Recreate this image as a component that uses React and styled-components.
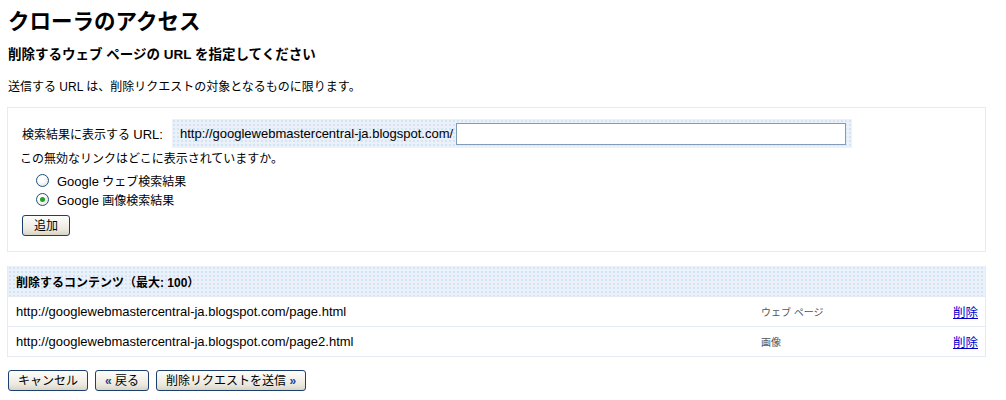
import React, { useState } from "react";
import styled, { createGlobalStyle } from "styled-components";

const GlobalStyle = createGlobalStyle`
  body {
    margin: 0;
    background: #fff;
    font-family: "Liberation Sans", "Noto Sans CJK JP", sans-serif;
    color: #000;
  }
`;

const dotted = `
  background-color: #ecf0f9;
  background-image: radial-gradient(circle, #cfe6f5 0.7px, transparent 0.9px);
  background-size: 4px 4px;
`;

const Page = styled.div`
  width: 979px;
  padding: 8px 0 0 7px;
`;

const Title = styled.h1`
  margin: 0 0 0 1px;
  font-size: 21.5px;
  line-height: 28px;
  font-weight: bold;
`;

const SubTitle = styled.h2`
  margin: 10px 0 0 1px;
  font-size: 13.5px;
  line-height: 18px;
  font-weight: bold;
`;

const Intro = styled.p`
  margin: 15px 0 0 1px;
  font-size: 12px;
  line-height: 16px;
`;

// latin runs render a touch larger than the japanese text around them
const Latin = styled.span`
  font-size: 13px;
`;

const FormBox = styled.div`
  margin-top: 12px;
  border: 1px solid #e4ebf5;
  padding: 11px 14px 13px;
  height: 119px;
`;

const UrlRow = styled.div`
  display: flex;
  align-items: center;
  font-size: 12px;
  height: 29px;
`;

const UrlLabel = styled.span`
  width: 150px;
`;

const Prefix = styled.div`
  ${dotted}
  display: flex;
  align-items: center;
  height: 29px;
  padding: 0 6px 0 8px;
  gap: 3px;
`;

const UrlInput = styled.input`
  width: 386px;
  height: 18px;
  border: 1px solid #7f9db9;
  padding: 1px;
  margin: 0;
  font-size: 12px;
  font-family: inherit;
  background: #fff;
`;

const Question = styled.div`
  font-size: 12px;
  line-height: 16px;
  margin-top: 3px;
  margin-left: -2px;
`;

const RadioList = styled.div`
  display: flex;
  flex-direction: column;
  margin: 4px 0 0 14px;
`;

const RadioRow = styled.label`
  display: flex;
  align-items: center;
  height: 19px;
  font-size: 12px;
  gap: 8px;
`;

const RadioDot = styled.span`
  width: 11px;
  height: 11px;
  border-radius: 50%;
  border: 1px solid #1c5180;
  background: radial-gradient(circle at 40% 35%, #fff 30%, #dcdcd6 100%);
  display: flex;
  align-items: center;
  justify-content: center;
  &::after {
    content: "";
    width: 5px;
    height: 5px;
    border-radius: 50%;
    background: ${p => (p.$on ? "#21a121" : "transparent")};
  }
`;

const Button = styled.button`
  height: 21px;
  padding: 0 ${p => p.$pad || 8}px;
  border: 1px solid #1c3f6e;
  border-radius: 3px;
  background: linear-gradient(#fdfdfb, #ece9df 70%, #d8d4c6);
  font-family: "Liberation Sans", "Noto Sans CJK JP", sans-serif;
  font-size: 12px;
  color: #000;
  line-height: 18px;
  cursor: pointer;
`;

const AddButton = styled(Button)`
  margin-top: 6px;
  width: 48px;
`;

const Table = styled.div`
  margin-top: 14px;
  border: 1px solid #e4ebf5;
  border-top: none;
`;

const TableHead = styled.div`
  ${dotted}
  height: 30px;
  display: flex;
  align-items: center;
  padding-left: 8px;
  font-size: 12px;
  font-weight: bold;
`;

const Row = styled.div`
  display: flex;
  align-items: center;
  height: 29px;
  border-top: 1px solid #e4ebf5;
  font-size: 13px;
  padding: 0 7px 0 8px;
`;

const RowUrl = styled.span`
  flex: 1;
`;

const RowType = styled.span`
  width: 192px;
  font-size: 10px;
  color: #555;
`;

const DeleteLink = styled.a`
  color: #0000cc;
  text-decoration: underline;
  font-size: 12.5px;
  cursor: pointer;
`;

const Actions = styled.div`
  display: flex;
  gap: 7px;
  margin-top: 13px;
  margin-left: 1px;
`;

const Arrow = styled.span`
  color: #1f3f9c;
  font-weight: bold;
`;

const items = [
  { url: "http://googlewebmastercentral-ja.blogspot.com/page.html", type: "ウェブ ページ" },
  { url: "http://googlewebmastercentral-ja.blogspot.com/page2.html", type: "画像" },
];

export default function App() {
  const [target, setTarget] = useState("image");

  return (
    <Page>
      <GlobalStyle />
      <Title>クローラのアクセス</Title>
      <SubTitle>削除するウェブ ページの URL を指定してください</SubTitle>
      <Intro>送信する URL は、削除リクエストの対象となるものに限ります。</Intro>

      <FormBox>
        <UrlRow>
          <UrlLabel>
            検索結果に表示する <Latin>URL:</Latin>
          </UrlLabel>
          <Prefix>
            <Latin>http://googlewebmastercentral-ja.blogspot.com/</Latin>
            <UrlInput type="text" />
          </Prefix>
        </UrlRow>
        <Question>この無効なリンクはどこに表示されていますか。</Question>
        <RadioList>
          <RadioRow onClick={() => setTarget("web")}>
            <RadioDot $on={target === "web"} />
            <span>
              <Latin>Google</Latin> ウェブ検索結果
            </span>
          </RadioRow>
          <RadioRow onClick={() => setTarget("image")}>
            <RadioDot $on={target === "image"} />
            <span>
              <Latin>Google</Latin> 画像検索結果
            </span>
          </RadioRow>
        </RadioList>
        <AddButton>追加</AddButton>
      </FormBox>

      <Table>
        <TableHead>削除するコンテンツ（最大: 100）</TableHead>
        {items.map(item => (
          <Row key={item.url}>
            <RowUrl>{item.url}</RowUrl>
            <RowType>{item.type}</RowType>
            <DeleteLink>削除</DeleteLink>
          </Row>
        ))}
      </Table>

      <Actions>
        <Button $pad={9}>キャンセル</Button>
        <Button $pad={9}>
          <Arrow>«</Arrow> 戻る
        </Button>
        <Button $pad={9}>
          削除リクエストを送信 <Arrow>»</Arrow>
        </Button>
      </Actions>
    </Page>
  );
}
